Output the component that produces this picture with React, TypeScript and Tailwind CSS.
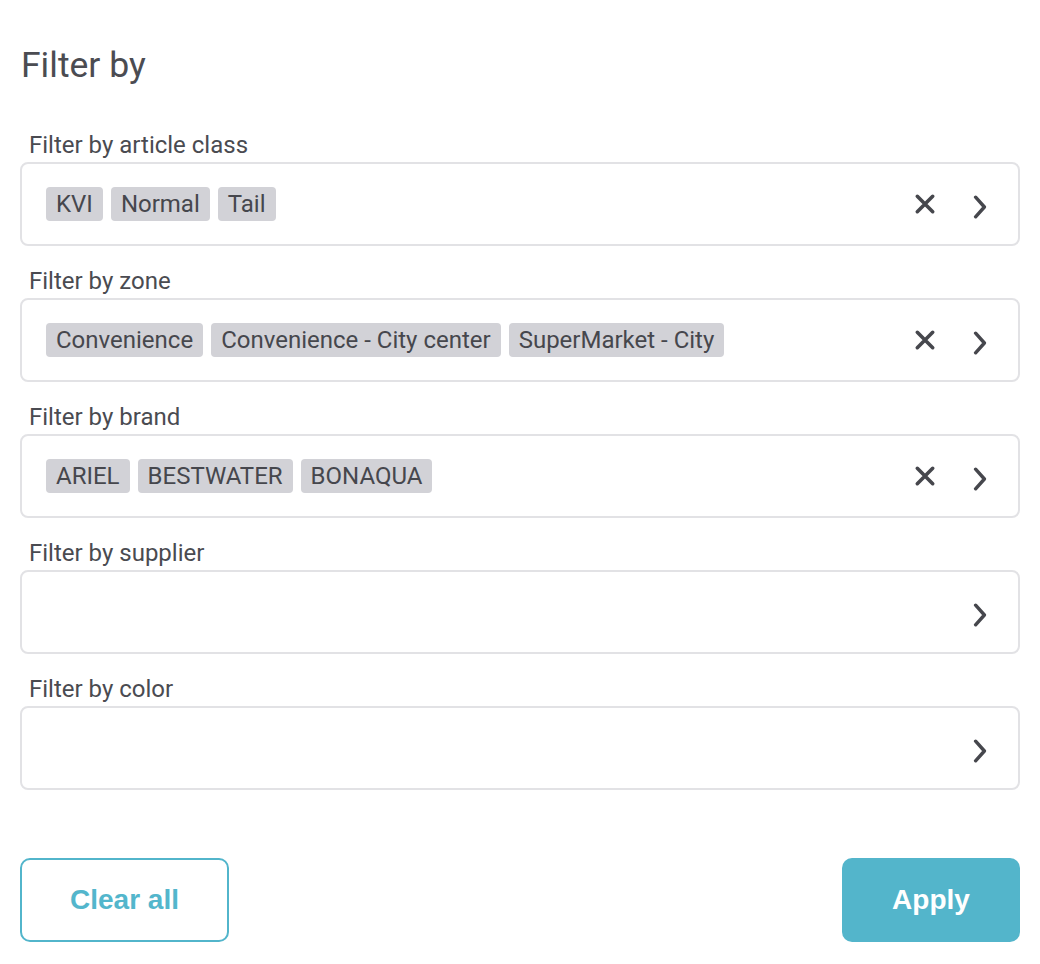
import React from "react";

const XIcon = () => (
  <svg width="24" height="24" viewBox="0 0 24 24" fill="none">
    <path d="M4.3 4.3 L19.7 19.7 M19.7 4.3 L4.3 19.7" stroke="#46474d" strokeWidth="3.6" strokeLinecap="round" />
  </svg>
);

const Chevron = () => (
  <svg width="24" height="24" viewBox="0 0 24 24" fill="none" className="mt-[6px]">
    <path d="M7.6 2.2 L16.4 12 L7.6 21.8" stroke="#46474d" strokeWidth="3.4" strokeLinecap="round" strokeLinejoin="round" />
  </svg>
);

const sections: { label: string; chips: string[] }[] = [
  { label: "Filter by article class", chips: ["KVI", "Normal", "Tail"] },
  { label: "Filter by zone", chips: ["Convenience", "Convenience - City center", "SuperMarket - City"] },
  { label: "Filter by brand", chips: ["ARIEL", "BESTWATER", "BONAQUA"] },
  { label: "Filter by supplier", chips: [] },
  { label: "Filter by color", chips: [] },
];

export default function App() {
  return (
    <div
      className="w-[1040px] h-[964px] bg-white px-[20px] pt-[44px] overflow-hidden"
      style={{ fontFamily: "Roboto, 'Noto Sans', sans-serif" }}
    >
      <h1 className="text-[35.5px] leading-[42px] text-[#4b4c52] font-normal pl-[1px]">Filter by</h1>
      <div className="mt-[45px] flex flex-col gap-[21px]">
        {sections.map((s) => (
          <div key={s.label} className="flex flex-col">
            <div className="text-[24px] leading-[28px] text-[#4a4b51] pl-[9px] mb-[3px]">{s.label}</div>
            <div className="h-[84px] border-2 border-[#e2e2e5] rounded-[8px] flex items-center pl-[24px] pr-[26px]">
              <div className="flex items-center gap-[8px]">
                {s.chips.map((c) => (
                  <span
                    key={c}
                    className="bg-[#d2d2d7] text-[#46474d] text-[24px] leading-[34px] px-[10px] rounded-[4px] whitespace-nowrap"
                  >
                    {c}
                  </span>
                ))}
              </div>
              <div className="ml-auto flex items-center gap-[31px]">
                {s.chips.length > 0 && <XIcon />}
                <Chevron />
              </div>
            </div>
          </div>
        ))}
      </div>
      <div
        className="mt-[68px] flex justify-between"
        style={{ fontFamily: "'Liberation Sans', Arial, sans-serif" }}
      >
        <button className="w-[209px] h-[84px] border-2 border-[#52b5cb] rounded-[10px] text-[#53b6cc] text-[28px] font-bold bg-white">
          Clear all
        </button>
        <button className="w-[178px] h-[84px] bg-[#53b5cb] rounded-[10px] text-white text-[28px] font-bold">
          Apply
        </button>
      </div>
    </div>
  );
}
